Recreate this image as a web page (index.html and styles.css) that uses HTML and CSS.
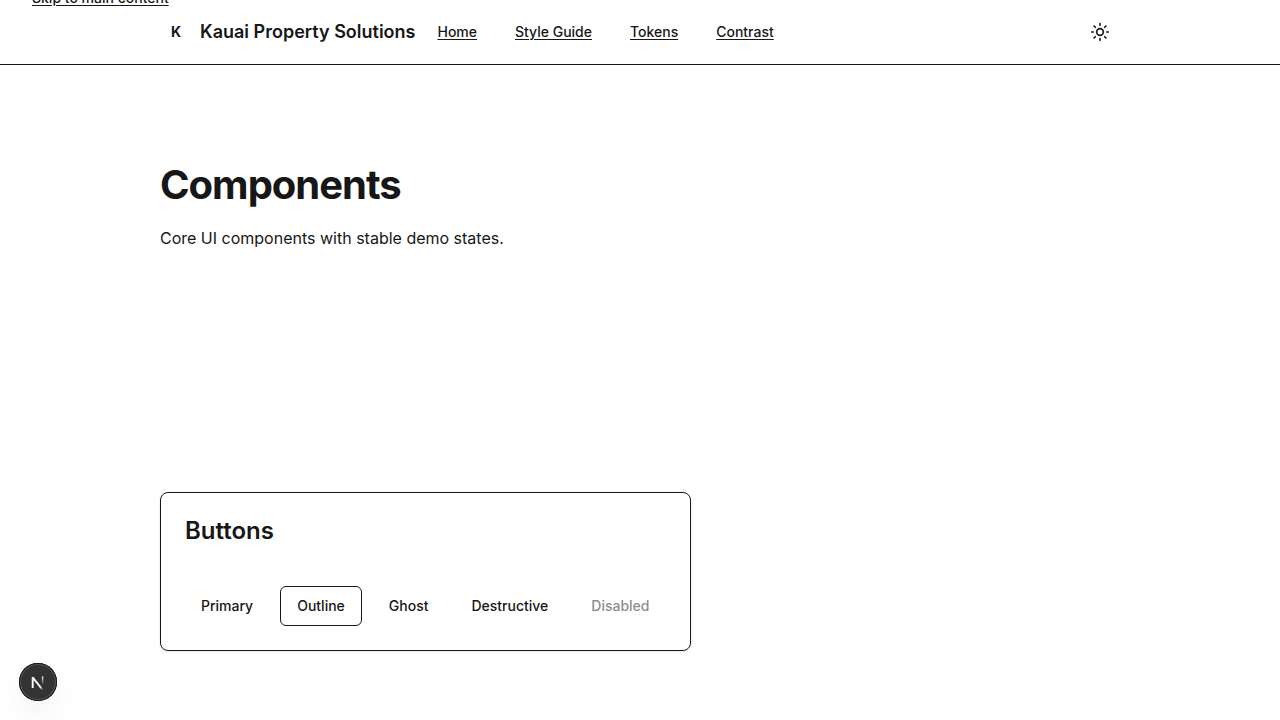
FILE: index.html
```html
<!DOCTYPE html>
<html lang="en">
<head>
<meta charset="utf-8">
<meta name="viewport" content="width=device-width, initial-scale=1">
<title>Components</title>
<link rel="stylesheet" href="styles.css">
</head>
<body>
<a class="skip-link" href="#main">Skip to main content</a>
<header class="site-header">
  <div class="container header-row">
    <a class="brand" href="#"><span class="brand-mark">K</span><span class="brand-name">Kauai Property Solutions</span></a>
    <nav class="site-nav" aria-label="Main">
      <a class="nav-link" href="#">Home</a>
      <a class="nav-link" href="#">Style Guide</a>
      <a class="nav-link" href="#">Tokens</a>
      <a class="nav-link" href="#">Contrast</a>
    </nav>
    <button class="theme-toggle" type="button" aria-label="Toggle theme">
      <svg width="20" height="20" viewBox="0 0 24 24" fill="none" stroke="currentColor" stroke-width="2" stroke-linecap="round" stroke-linejoin="round" aria-hidden="true"><circle cx="12" cy="12" r="4"/><path d="M12 2v2M12 20v2M4.93 4.93l1.41 1.41M17.66 17.66l1.41 1.41M2 12h2M20 12h2M6.34 17.66l-1.41 1.41M19.07 4.93l-1.41 1.41"/></svg>
    </button>
  </div>
</header>
<main class="container page" id="main">
  <section class="intro">
    <h1 class="page-title">Components</h1>
    <p class="lead">Core UI components with stable demo states.</p>
  </section>
  <section class="card">
    <h2 class="card-title">Buttons</h2>
    <div class="button-row">
      <button class="btn" type="button">Primary</button>
      <button class="btn btn-outline" type="button">Outline</button>
      <button class="btn" type="button">Ghost</button>
      <button class="btn" type="button">Destructive</button>
      <button class="btn" type="button" disabled>Disabled</button>
    </div>
  </section>
</main>
<button class="dev-badge" type="button" aria-label="Open developer tools">
  <svg width="38" height="38" viewBox="0 0 38 38" fill="none" aria-hidden="true">
    <defs>
      <linearGradient id="diagonal" gradientUnits="userSpaceOnUse" x1="19" y1="18" x2="25" y2="26"><stop offset="0.6" stop-color="#fff"/><stop offset="1" stop-color="#fff" stop-opacity="0"/></linearGradient>
      <linearGradient id="stem" gradientUnits="userSpaceOnUse" x1="24" y1="13" x2="24" y2="22"><stop stop-color="#fff"/><stop offset="1" stop-color="#fff" stop-opacity="0"/></linearGradient>
    </defs>
    <path d="M13.7 25V14.3L23.7 27" stroke="url(#diagonal)" stroke-width="1.9" stroke-linejoin="bevel"/>
    <path d="M23.6 13.5V23" stroke="url(#stem)" stroke-width="1.5"/>
  </svg>
</button>
</body>
</html>
```
FILE: styles.css
```css
* { box-sizing: border-box; }
body {
  margin: 0;
  background: #fff;
  color: #171717;
  font: 400 16px/24px Inter, "Liberation Sans", sans-serif;
}
h1, h2, p { margin: 0; }
button {
  border: 0;
  background: none;
  color: inherit;
  font: inherit;
  cursor: pointer;
}
.container {
  max-width: 1024px;
  margin: 0 auto;
  padding: 0 32px;
}
.skip-link {
  position: absolute;
  top: -12px;
  left: 32px;
  color: inherit;
  font-size: 14px;
  font-weight: 500;
  line-height: 20px;
  text-underline-offset: 2px;
}
.site-header { border-bottom: 1px solid #171717; }
.header-row {
  display: flex;
  align-items: center;
  gap: 22px;
  min-height: 64px;
}
.brand {
  display: flex;
  align-items: center;
  gap: 8px;
  color: inherit;
  text-decoration: none;
}
.brand-mark {
  width: 32px;
  text-align: center;
  font-size: 14px;
  font-weight: 700;
}
.brand-name {
  font-size: 18px;
  font-weight: 600;
}
.site-nav {
  display: flex;
  gap: 38px;
}
.nav-link {
  color: inherit;
  font-size: 14px;
  font-weight: 500;
  text-underline-offset: 2px;
}
.theme-toggle {
  display: grid;
  place-items: center;
  width: 40px;
  height: 40px;
  margin-left: auto;
  padding: 0;
}
.page { padding-top: 96px; padding-bottom: 64px; }
.intro { margin-bottom: 242px; }
.page-title {
  margin-bottom: 17px;
  font-size: 40px;
  font-weight: 700;
  line-height: 48px;
  letter-spacing: -1px;
}
.lead { font-size: 16px; }
.card {
  width: fit-content;
  padding: 24px;
  border: 1px solid #171717;
  border-radius: 8px;
  box-shadow: 0 1px 3px rgb(0 0 0 / 10%);
}
.card-title {
  margin-bottom: 42px;
  font-size: 24px;
  font-weight: 600;
  line-height: 27px;
}
.button-row {
  display: flex;
  flex-wrap: wrap;
  gap: 11px;
}
.btn {
  height: 40px;
  padding: 0 16px;
  border-radius: 6px;
  font-size: 14px;
  font-weight: 500;
}
.btn-outline { border: 1px solid #171717; }
.btn:disabled { opacity: .5; cursor: default; }
.dev-badge {
  position: fixed;
  bottom: 19px;
  left: 19px;
  width: 38px;
  height: 38px;
  padding: 0;
  border-radius: 50%;
  background: #333;
  box-shadow: inset 0 0 0 1px #171717, inset 0 0 0 2px #555, 0 16px 32px -8px rgb(0 0 0 / 14%);
}
.dev-badge svg { display: block; }
```
